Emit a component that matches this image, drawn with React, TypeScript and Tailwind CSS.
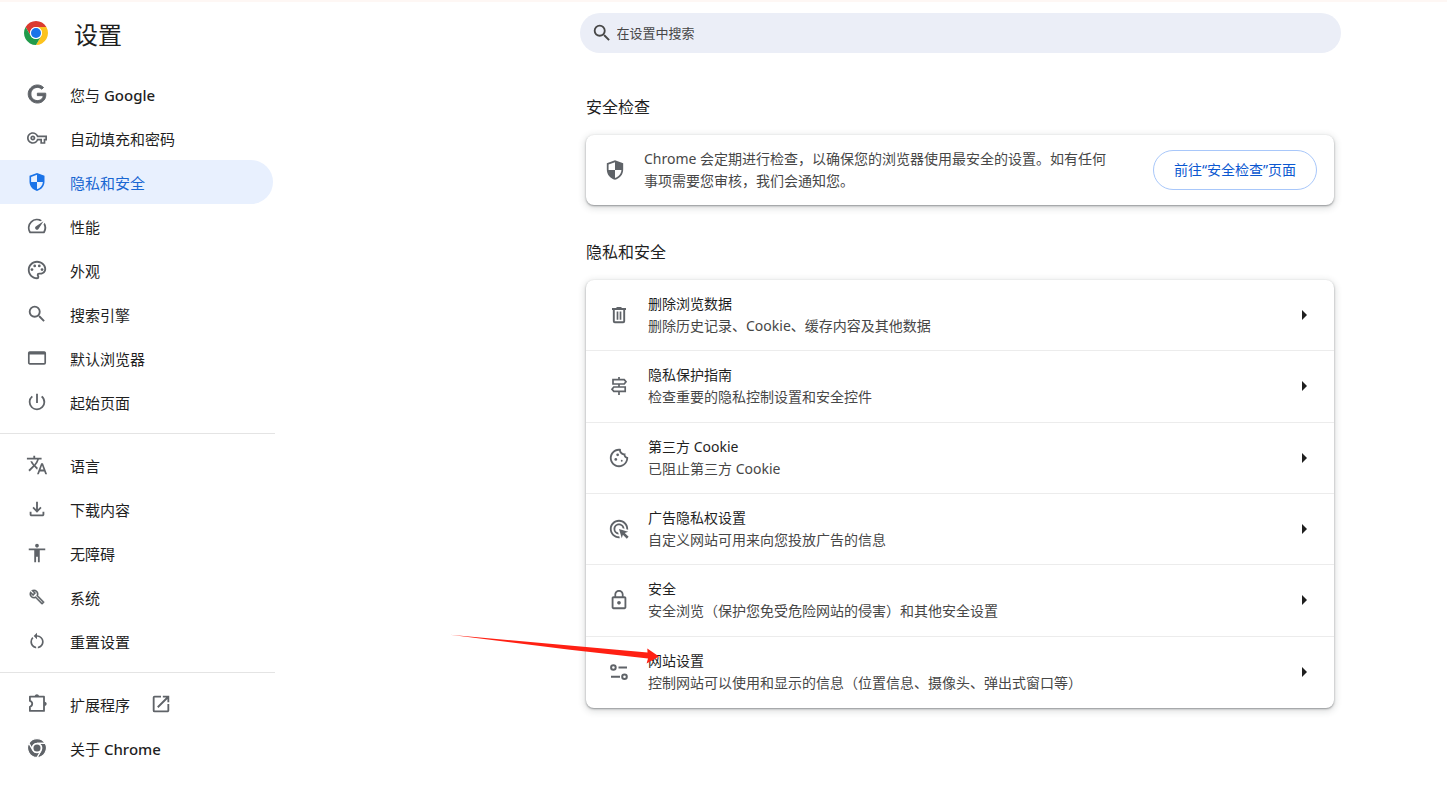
import React from 'react';
import {
    MdAccessibility,
    MdLockOutline,
    MdOpenInNew,
    MdOutlineAdsClick,
    MdOutlineCookie,
    MdOutlineFileDownload,
    MdOutlinePalette,
    MdOutlineVpnKey,
    MdPowerSettingsNew,
    MdRestartAlt,
    MdSearch,
    MdSpeed,
    MdTranslate,
} from 'react-icons/md';

interface IconProps {
    className?: string;
}

interface NavEntry {
    label: string;
    brand?: string;
    icon: React.ReactNode;
    active?: boolean;
    external?: boolean;
}

interface SettingRow {
    title: string;
    description: string;
    icon: React.ReactNode;
    highlighted?: boolean;
}

const ChromeLogo: React.FC<IconProps> = ({ className }) => (
    <svg viewBox="0 0 48 48" className={className} aria-hidden="true">
        <path fill="#db3a2f" d="M3.22 12A24 24 0 0 1 44.78 12H24A12 12 0 0 0 13.61 30Z" />
        <path fill="#fcc31e" d="M44.78 12A24 24 0 0 1 24 48L34.39 30A12 12 0 0 0 24 12Z" />
        <path fill="#219b4b" d="M24 48A24 24 0 0 1 3.22 12L13.61 30A12 12 0 0 0 34.39 30Z" />
        <circle cx="24" cy="24" r="12" fill="#fff" />
        <circle cx="24" cy="24" r="10" fill="#1a73e8" />
    </svg>
);

const ChromeMonoIcon: React.FC<IconProps> = ({ className }) => (
    <svg viewBox="-4 -4 56 56" className={className} aria-hidden="true">
        <g fill="currentColor" stroke="#fff" strokeWidth="3">
            <path d="M3.22 12A24 24 0 0 1 44.78 12H24A12 12 0 0 0 13.61 30Z" />
            <path d="M44.78 12A24 24 0 0 1 24 48L34.39 30A12 12 0 0 0 24 12Z" />
            <path d="M24 48A24 24 0 0 1 3.22 12L13.61 30A12 12 0 0 0 34.39 30Z" />
        </g>
        <circle cx="24" cy="24" r="12.5" fill="#fff" />
        <circle cx="24" cy="24" r="9" fill="currentColor" />
    </svg>
);

const GoogleIcon: React.FC<IconProps> = ({ className }) => (
    <svg viewBox="-2.6 -2.6 29.2 29.2" className={className} aria-hidden="true">
        <path
            fill="currentColor"
            stroke="currentColor"
            strokeWidth="1.3"
            d="M12.48 10.92v3.28h7.84c-.24 1.84-.853 3.187-1.787 4.133-1.147 1.147-2.933 2.4-6.053 2.4-4.827 0-8.6-3.893-8.6-8.72s3.773-8.72 8.6-8.72c2.6 0 4.507 1.027 5.907 2.347l2.307-2.307C18.747 1.44 16.133 0 12.48 0 5.867 0 .307 5.387.307 12s5.56 12 12.173 12c3.573 0 6.267-1.173 8.373-3.36 2.16-2.16 2.84-5.213 2.84-7.667 0-.76-.053-1.467-.173-2.053H12.48z"
        />
    </svg>
);

const ShieldIcon: React.FC<IconProps> = ({ className }) => (
    <svg viewBox="0 0 22 22" className={className} aria-hidden="true">
        <path
            fill="currentColor"
            fillRule="evenodd"
            d="M11 2 18.5 4.8V10.6C18.5 15.2 15.4 18.9 11 20 6.6 18.9 3.5 15.2 3.5 10.6V4.8ZM11 3.8 5.1 6V11H11V18.3C14.3 17.3 16.6 14.5 16.9 11H11Z"
        />
    </svg>
);

const WindowIcon: React.FC<IconProps> = ({ className }) => (
    <svg viewBox="0 0 22 22" className={className} fill="none" stroke="currentColor" aria-hidden="true">
        <rect x="2.8" y="5" width="16.4" height="11.8" rx="1" strokeWidth="1.7" />
        <path d="M2.8 6.2H19.2" strokeWidth="2.6" />
    </svg>
);

const WrenchIcon: React.FC<IconProps> = ({ className }) => (
    <svg viewBox="0 0 24 24" className={className} aria-hidden="true">
        <path
            fill="currentColor"
            stroke="currentColor"
            strokeWidth="0.5"
            d="m22.61 18.99-9.08-9.08c.93-2.34.45-5.1-1.44-7C9.79.61 6.21.4 3.66 2.26L7.5 6.11 6.08 7.52 2.25 3.69C.39 6.23.6 9.82 2.9 12.11c1.86 1.86 4.57 2.35 6.89 1.48l9.11 9.11c.39.39 1.02.39 1.41 0l2.3-2.3c.4-.38.4-1.01 0-1.41zm-3 1.6-9.46-9.46c-.61.45-1.29.72-2 .82-1.36.2-2.79-.21-3.83-1.25C3.37 9.76 2.93 8.5 3 7.26l3.09 3.09 4.24-4.24-3.09-3.09c1.24-.07 2.49.37 3.44 1.31 1.08 1.08 1.49 2.57 1.24 3.96-.12.71-.42 1.37-.88 1.96l9.45 9.45-.88.89z"
        />
    </svg>
);

const ExtensionIcon: React.FC<IconProps> = ({ className }) => (
    <svg viewBox="0 0 22 22" className={className} aria-hidden="true">
        <path
            fill="none"
            stroke="currentColor"
            strokeWidth="1.8"
            strokeLinejoin="round"
            d="M3.9 3.7H18V17.9H3.9V13.8C7 12.9 7 8.8 3.9 7.9Z"
        />
        <path
            fill="currentColor"
            d="M8.8 3.4C8.8 .6 13 .6 13 3.4ZM18.4 8.7C21.4 8.7 21.4 12.9 18.4 12.9Z"
        />
    </svg>
);

const TrashIcon: React.FC<IconProps> = ({ className }) => (
    <svg viewBox="0 0 22 22" className={className} fill="none" stroke="currentColor" aria-hidden="true">
        <path d="M4 5H18M8.5 4H13.5" strokeWidth="1.9" />
        <path d="M5.8 5V17.2Q5.8 18.2 6.8 18.2H15.2Q16.2 18.2 16.2 17.2V5" strokeWidth="1.9" />
        <path d="M9.5 7.5V15.8M12.5 7.5V15.8" strokeWidth="1.7" />
    </svg>
);

const SignpostIcon: React.FC<IconProps> = ({ className }) => (
    <svg viewBox="0 0 22 22" className={className} fill="none" stroke="currentColor" strokeWidth="1.7" aria-hidden="true">
        <path d="M11 2V4.6M11 9V12M11 16.4V20" />
        <path d="M5 4.6H16.2L18 6.8 16.2 9H5Z" />
        <path d="M17.2 12H5.8L4 14.2 5.8 16.4H17.2Z" />
    </svg>
);

const TuneIcon: React.FC<IconProps> = ({ className }) => (
    <svg viewBox="0 0 22 22" className={className} fill="none" stroke="currentColor" strokeWidth="2" aria-hidden="true">
        <circle cx="5.4" cy="6.5" r="2.3" />
        <path d="M10.5 6.5H19M3 15.8H12" />
        <circle cx="16.5" cy="15.8" r="2.3" />
    </svg>
);

const PointerArrow: React.FC = () => (
    <svg
        viewBox="0 0 210 30"
        className="pointer-events-none absolute -left-[136px] -top-[3px] h-[30px] w-[210px]"
        aria-hidden="true"
    >
        <path fill="#ff2013" d="M0 .8 197.5 18.4 197.3 14.4 209 22.6 196.6 29.4 198 24.4 120 15.8Z" />
    </svg>
);

const navGroups: NavEntry[][] = [
    [
        { label: '您与', brand: 'Google', icon: <GoogleIcon className="size-[22px]" /> },
        { label: '自动填充和密码', icon: <MdOutlineVpnKey className="size-5" /> },
        { label: '隐私和安全', icon: <ShieldIcon className="size-[22px] text-[#1a73e8]" />, active: true },
        { label: '性能', icon: <MdSpeed className="size-[22px]" /> },
        { label: '外观', icon: <MdOutlinePalette className="size-[22px]" /> },
        { label: '搜索引擎', icon: <MdSearch className="size-[22px]" /> },
        { label: '默认浏览器', icon: <WindowIcon className="size-[22px]" /> },
        { label: '起始页面', icon: <MdPowerSettingsNew className="size-[22px]" /> },
    ],
    [
        { label: '语言', icon: <MdTranslate className="size-[22px]" /> },
        { label: '下载内容', icon: <MdOutlineFileDownload className="size-[22px]" /> },
        { label: '无障碍', icon: <MdAccessibility className="size-[22px]" /> },
        { label: '系统', icon: <WrenchIcon className="size-4" /> },
        { label: '重置设置', icon: <MdRestartAlt className="size-5" /> },
    ],
    [
        { label: '扩展程序', icon: <ExtensionIcon className="size-[22px]" />, external: true },
        { label: '关于', brand: 'Chrome', icon: <ChromeMonoIcon className="size-[22px]" /> },
    ],
];

const settingRows: SettingRow[] = [
    {
        title: '删除浏览数据',
        description: '删除历史记录、Cookie、缓存内容及其他数据',
        icon: <TrashIcon className="size-[22px]" />,
    },
    {
        title: '隐私保护指南',
        description: '检查重要的隐私控制设置和安全控件',
        icon: <SignpostIcon className="size-[22px]" />,
    },
    {
        title: '第三方 Cookie',
        description: '已阻止第三方 Cookie',
        icon: <MdOutlineCookie className="size-[22px]" />,
    },
    {
        title: '广告隐私权设置',
        description: '自定义网站可用来向您投放广告的信息',
        icon: <MdOutlineAdsClick className="size-[22px]" />,
    },
    {
        title: '安全',
        description: '安全浏览（保护您免受危险网站的侵害）和其他安全设置',
        icon: <MdLockOutline className="size-[22px]" />,
    },
    {
        title: '网站设置',
        description: '控制网站可以使用和显示的信息（位置信息、摄像头、弹出式窗口等）',
        icon: <TuneIcon className="size-[22px]" />,
        highlighted: true,
    },
];

const NavLink: React.FC<{ entry: NavEntry }> = ({ entry }) => (
    <a
        href="#"
        className={
            entry.active
                ? 'mr-0.5 flex h-11 items-center rounded-r-full bg-[#e8f0fe] pl-[26px] text-[#1967d2]'
                : 'mr-0.5 flex h-11 items-center rounded-r-full pl-[26px] text-[#1f1f1f]'
        }
    >
        <span className="flex size-[22px] shrink-0 items-center justify-center text-[#5f6368]">{entry.icon}</span>
        <span className="ml-[22px] pt-px text-[15px] leading-6">
            {entry.label}
            {entry.brand && <span className="font-medium"> {entry.brand}</span>}
        </span>
        {entry.external && <MdOpenInNew className="ml-5 size-[22px] text-[#5f6368]" />}
    </a>
);

const Sidebar: React.FC = () => (
    <aside className="w-[473px] shrink">
        <div className="w-[275px]">
            <header className="mb-2 flex h-[62px] items-center gap-[26px] pl-6">
                <ChromeLogo className="size-6" />
                <h1 className="pt-[3px] text-2xl text-[#1f1f1f]">设置</h1>
            </header>
            <nav>
                {navGroups.map((group, index) => (
                    <div key={index} className={index > 0 ? 'mt-[9px] border-t border-[#e4e4e4] pt-[9px]' : ''}>
                        {group.map((entry) => (
                            <NavLink key={entry.label} entry={entry} />
                        ))}
                    </div>
                ))}
            </nav>
        </div>
    </aside>
);

const SearchBox: React.FC = () => (
    <div className="flex h-10 w-full max-w-[761px] items-center gap-1 rounded-full bg-[#ebeef7] px-[11px]">
        <label htmlFor="settings-search" className="text-[#474747]" aria-label="在设置中搜索">
            <MdSearch className="size-[22px]" />
        </label>
        <input
            id="settings-search"
            type="text"
            placeholder="在设置中搜索"
            className="flex-1 bg-transparent text-[13px] leading-5 text-[#1f1f1f] outline-none placeholder:text-[#474747]"
        />
    </div>
);

const SafetyCheck: React.FC = () => (
    <section className="mt-[42px] w-full max-w-[748px]">
        <h2 className="text-base text-[#1f1f1f]">安全检查</h2>
        <div className="mt-4 flex items-center rounded-lg bg-white px-[17px] py-[13px] shadow-[0_1px_2px_rgba(60,64,67,0.5),0_2px_6px_2px_rgba(60,64,67,0.15)]">
            <ShieldIcon className="size-6 shrink-0 text-[#5f6368]" />
            <p className="ml-[17px] flex-1 text-sm leading-[22px] text-[#474747]">
                Chrome 会定期进行检查，以确保您的浏览器使用最安全的设置。如有任何事项需要您审核，我们会通知您。
            </p>
            <button
                type="button"
                className="ml-10 h-10 w-[164px] shrink-0 rounded-full border border-[#a8c7fa] text-sm text-[#0b57d0]"
            >
                前往“安全检查”页面
            </button>
        </div>
    </section>
);

const PrivacySection: React.FC = () => (
    <section className="mt-[35px] w-full max-w-[748px]">
        <h2 className="text-base text-[#1f1f1f]">隐私和安全</h2>
        <ul className="mt-4 grid min-h-[428px] auto-rows-fr divide-y divide-[#ececec] rounded-lg bg-white shadow-[0_1px_2px_rgba(60,64,67,0.5),0_2px_6px_2px_rgba(60,64,67,0.15)]">
            {settingRows.map((row) => (
                <li key={row.title} className="relative flex">
                    <button type="button" className="flex flex-1 items-center pl-[22px] pr-[27px] text-left">
                        <span className="shrink-0 text-[#5f6368]">{row.icon}</span>
                        <span className="ml-[18px] flex-1 text-sm">
                            <span className="block leading-[22px] text-[#1f1f1f]">{row.title}</span>
                            <span className="block leading-[22px] text-[#474747]">{row.description}</span>
                        </span>
                        <svg viewBox="0 0 5 10" className="h-2.5 w-[5px] fill-[#1f1f1f]" aria-hidden="true">
                            <path d="M0 0 5 5 0 10Z" />
                        </svg>
                    </button>
                    {row.highlighted && <PointerArrow />}
                </li>
            ))}
        </ul>
    </section>
);

export default function App() {
    return (
        <div className="flex min-h-screen border-t-2 border-[#fef7f4] bg-white font-['Noto_Sans','Noto_Sans_CJK_SC',sans-serif]">
            <Sidebar />
            <main className="flex flex-1 flex-col items-center pb-12 pt-[11px]">
                <SearchBox />
                <SafetyCheck />
                <PrivacySection />
            </main>
        </div>
    );
}
